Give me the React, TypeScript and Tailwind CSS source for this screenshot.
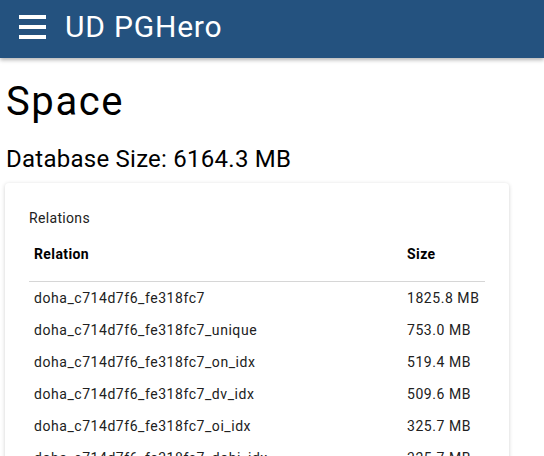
const relations = [
  { name: "doha_c714d7f6_fe318fc7", size: "1825.8 MB" },
  { name: "doha_c714d7f6_fe318fc7_unique", size: "753.0 MB" },
  { name: "doha_c714d7f6_fe318fc7_on_idx", size: "519.4 MB" },
  { name: "doha_c714d7f6_fe318fc7_dv_idx", size: "509.6 MB" },
  { name: "doha_c714d7f6_fe318fc7_oi_idx", size: "325.7 MB" },
  { name: "doha_c714d7f6_fe318fc7_dohi_idx", size: "325.7 MB" },
];

function MenuIcon() {
  return (
    <svg width="28" height="24" viewBox="0 0 28 24" className="mb-[4px]" fill="#fff">
      <rect x="0" y="0" width="27" height="4" />
      <rect x="0" y="10" width="27" height="4" />
      <rect x="0" y="20" width="27" height="4" />
    </svg>
  );
}

export default function App() {
  return (
    <div className="h-screen overflow-hidden bg-white font-['Roboto',sans-serif] text-[#212121]">
      {/* App bar */}
      <header className="relative z-10 h-[58px] bg-[#24527f] flex items-center pl-[19px] shadow-[0_2px_4px_rgba(0,0,0,0.3)]">
        <MenuIcon />
        <h1 className="ml-[18px] mb-[4px] text-[30px] leading-[36px] tracking-[0.8px] text-white font-normal">
          UD PGHero
        </h1>
      </header>

      <main className="px-[6px] pt-[20px]">
        <h2 className="text-[40px] leading-[48px] tracking-[1.6px] text-black">Space</h2>
        <p className="mt-[17px] text-[24px] leading-[32px] tracking-[0.25px] text-black">
          Database Size: 6164.3 MB
        </p>

        <div className="mt-[8px] ml-[-1px] w-[504px] rounded-[4px] bg-white pt-[25px] pl-[24px] pb-[20px] shadow-[0_1px_4px_rgba(0,0,0,0.18)]">
          <div className="text-[14px] leading-[20px] tracking-[0.33px] text-[#212121]">Relations</div>

          <div className="w-[456px] text-[14px] leading-[20px]">
            <div className="grid grid-cols-[378px_1fr] border-b border-[#d6d6d6] pt-[16px] pb-[17px] font-bold tracking-[0.4px] text-black">
              <div className="pl-[5px]">Relation</div>
              <div>Size</div>
            </div>
            {relations.map((r) => (
              <div key={r.name} className="grid grid-cols-[378px_1fr] py-[6px] tracking-[0.55px] text-[#212121]">
                <div className="pl-[5px]">{r.name}</div>
                <div>{r.size}</div>
              </div>
            ))}
          </div>
        </div>
      </main>
    </div>
  );
}
